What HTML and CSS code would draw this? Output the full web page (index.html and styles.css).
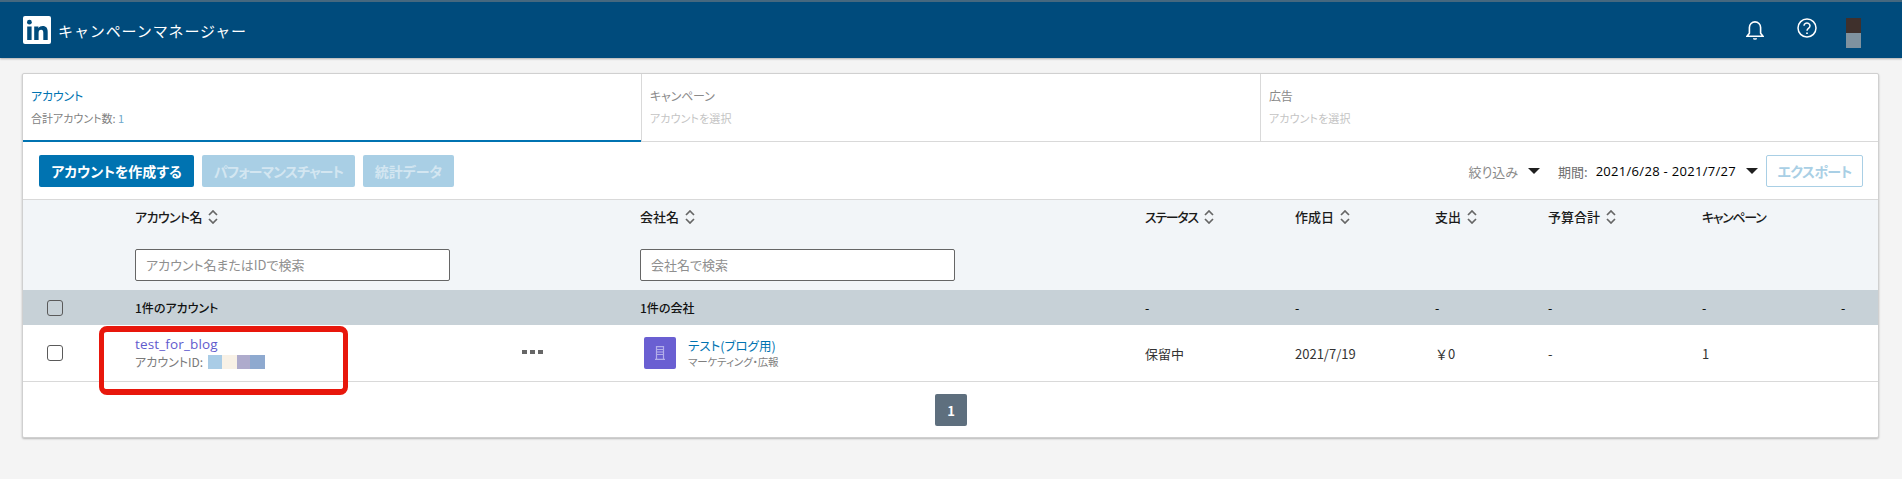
FILE: index.html
```html
<!DOCTYPE html>
<html lang="ja">
<head>
<meta charset="utf-8">
<title>キャンペーンマネージャー</title>
<link rel="stylesheet" href="styles.css">
</head>
<body>
<header class="topbar">
  <div class="brand">
    <svg class="logo" viewBox="0 0 28 28"><rect width="28" height="28" rx="2" fill="#fff"/><circle cx="6.4" cy="6.2" r="2.4" fill="#004b7c"/><path fill="#004b7c" d="M4.2 10.4h4.4V24H4.2zM11.2 10.4h4.2v1.900c.8-1.300 2.300-2.200 4.300-2.200 3.600 0 5 2.300 5 5.900V24h-4.400v-7.200c0-1.800-.6-3-2.200-3-1.700 0-2.500 1.200-2.500 3V24h-4.400z"/></svg>
    <span class="brand-name">キャンペーンマネージャー</span>
  </div>
  <div class="top-icons">
    <svg class="bell" viewBox="0 0 18 20" fill="none" stroke="#fff" stroke-width="1.600"><path d="M1 16.200h16l-2.400-3V7.500a5.600 5.600 0 0 0-11.200 0v5.700z"/><path d="M7 18.200h4v.6a2 1 0 0 1-4 0z" fill="#fff" stroke="none"/></svg>
    <svg class="help" viewBox="0 0 20 20" fill="none" stroke="#fff" stroke-width="1.500"><circle cx="10" cy="10" r="9"/><path d="M7 7.800a3 2.800 0 1 1 4.700 2.300c-1 .7-1.700 1.200-1.700 2.600"/><path d="M10 14.400v1.700" stroke-width="1.700"/></svg>
    <div class="avatar"><div class="avatar-top"></div><div class="avatar-bottom"></div></div>
  </div>
</header>

<main class="card">
  <nav class="tabs">
    <div class="tab tab-active">
      <div class="tab-title">アカウント</div>
      <div class="tab-sub">合計アカウント数: <span class="tab-count">1</span></div>
    </div>
    <div class="tab">
      <div class="tab-title">キャンペーン</div>
      <div class="tab-sub tab-hint">アカウントを選択</div>
    </div>
    <div class="tab">
      <div class="tab-title">広告</div>
      <div class="tab-sub tab-hint">アカウントを選択</div>
    </div>
  </nav>

  <div class="toolbar">
    <div class="actions">
      <button class="btn btn-primary">アカウントを作成する</button>
      <button class="btn btn-disabled btn-chart">パフォーマンスチャート</button>
      <button class="btn btn-disabled btn-stats">統計データ</button>
    </div>
    <div class="filters">
      <span class="filter-label">絞り込み</span><span class="caret"></span>
      <span class="period-label">期間:</span><span class="period-value">2021/6/28 - 2021/7/27</span><span class="caret"></span>
      <button class="btn-export">エクスポート</button>
    </div>
  </div>

  <div class="thead">
    <div class="row-grid head-row">
      <div></div>
      <div class="th"><span class="th-mixed">アカウント名</span> <svg class="sort" viewBox="0 0 10 14"><path d="M1 5l4-4 4 4M1 9l4 4 4-4"/></svg></div>
      <div class="th"><span>会社名</span> <svg class="sort" viewBox="0 0 10 14"><path d="M1 5l4-4 4 4M1 9l4 4 4-4"/></svg></div>
      <div class="th"><span class="th-kana">ステータス</span> <svg class="sort" viewBox="0 0 10 14"><path d="M1 5l4-4 4 4M1 9l4 4 4-4"/></svg></div>
      <div class="th"><span>作成日</span> <svg class="sort" viewBox="0 0 10 14"><path d="M1 5l4-4 4 4M1 9l4 4 4-4"/></svg></div>
      <div class="th"><span>支出</span> <svg class="sort" viewBox="0 0 10 14"><path d="M1 5l4-4 4 4M1 9l4 4 4-4"/></svg></div>
      <div class="th"><span>予算合計</span> <svg class="sort" viewBox="0 0 10 14"><path d="M1 5l4-4 4 4M1 9l4 4 4-4"/></svg></div>
      <div class="th"><span class="th-kana">キャンペーン</span></div>
      <div></div>
    </div>
    <div class="row-grid search-row">
      <div></div>
      <div><input class="search" placeholder="アカウント名またはIDで検索"></div>
      <div><input class="search" placeholder="会社名で検索"></div>
    </div>
  </div>

  <div class="row-grid group-row">
    <div class="check-cell"><span class="check"></span></div>
    <div>1件のアカウント</div>
    <div>1件の会社</div>
    <div>-</div><div>-</div><div>-</div><div>-</div><div>-</div><div>-</div>
  </div>

  <div class="row-grid data-row">
    <div class="check-cell"><span class="check"></span></div>
    <div class="account-cell">
      <div class="account-main">
        <a class="account-name">test_for_blog</a>
        <div class="account-id">アカウントID: <span class="redact"><i class="r1"></i><i class="r2"></i><i class="r3"></i><i class="r4"></i></span></div>
      </div>
      <div class="dots"><i></i><i></i><i></i></div>
      <div class="annotation"></div>
    </div>
    <div class="company-cell">
      <div class="company-icon"><svg viewBox="0 0 10 14" fill="none" stroke="#b3aeea" stroke-width="1.200"><path d="M1.500.6h7v12.800h-7zM1.500 3.500h7M1.500 6h7M1.500 8.500h7M0 13.400h10"/></svg></div>
      <div>
        <a class="company-name">テスト(ブログ用)</a>
        <div class="company-sub">マーケティング・広報</div>
      </div>
    </div>
    <div>保留中</div>
    <div>2021/7/19</div>
    <div class="spend">￥0</div>
    <div>-</div>
    <div>1</div>
    <div></div>
  </div>

  <div class="pager"><button class="page">1</button></div>
</main>
</body>
</html>
```
FILE: styles.css
```css
* { box-sizing: border-box; }
html, body { margin: 0; padding: 0; }
body {
  background: #f4f4f4;
  height: 479px;
  overflow: hidden;
  font-family: "Noto Sans CJK JP", "Open Sans", sans-serif;
  font-feature-settings: "palt";
  font-size: 12px;
  color: #1f1f1f;
}
.topbar {
  height: 58px;
  background: #004b7c;
  border-top: 2px solid #46687f;
  box-shadow: 0 1px 2px rgba(0,0,0,.3);
  display: flex;
  justify-content: space-between;
  align-items: flex-start;
  padding: 14px 41px 0 23px;
}
.brand { display: flex; align-items: center; gap: 7px; }
.logo { width: 28px; height: 28px; display: block; }
.brand-name { color: #fff; font-size: 15px; letter-spacing: .9px; font-feature-settings: normal; }
.top-icons { display: flex; align-items: flex-start; }
.bell { width: 18px; height: 20px; margin-top: 4px; }
.help { width: 20px; height: 20px; margin: 2px 29px 0 33px; }
.avatar { width: 15px; height: 30px; margin-top: 2px; }
.avatar-top { height: 15px; background: #3f302c; }
.avatar-bottom { height: 15px; background: #7f929f; }

.card {
  margin: 15px 23px 0 22px;
  height: 365px;
  background: #fff;
  border: 1px solid #d0d0d0;
  border-radius: 2px;
  box-shadow: 0 1px 2px rgba(0,0,0,.25);
}
.tabs {
  display: grid;
  grid-template-columns: 618px 619px 1fr;
  height: 68px;
  border-bottom: 1px solid #d9d9d9;
}
.tab { padding: 14px 8px 0 8px; border-left: 1px solid #d9d9d9; }
.tab-active { border-left: 0; border-bottom: 2px solid #0073b1; height: 68px; }
.tab-title { font-size: 12px; line-height: 16px; color: #8a8a8a; letter-spacing: -.2px; }
.tab-sub { font-size: 11px; line-height: 14px; margin-top: 7px; color: #c4c4c4; }
.tab-hint { letter-spacing: .1px; }
.tab-active .tab-title { color: #0073b1; }
.tab-active .tab-sub { color: #7f7f7f; }
.tab-active .tab-sub .tab-count { color: #6fa8cc; }

.toolbar {
  height: 58px;
  display: flex;
  justify-content: space-between;
  padding: 13px 15px 0 16px;
  border-bottom: 1px solid #d9d9d9;
}
.actions { display: flex; gap: 8px; }
.btn {
  height: 32px;
  border: 0;
  border-radius: 2px;
  font: inherit;
  font-feature-settings: "palt";
  font-size: 14px;
  font-weight: 700;
  padding: 0;
}
.btn-primary { width: 155px; background: #0073b1; color: #fff; }
.btn-disabled { background: #a9cfe5; color: #d3e6f1; }
.btn-chart { width: 153px; letter-spacing: -1px; }
.btn-stats { width: 91px; }
.filters { display: flex; align-items: center; height: 32px; }
.filter-label { color: #8a8a8a; font-size: 13px; }
.caret {
  width: 0; height: 0;
  border-left: 6px solid transparent;
  border-right: 6px solid transparent;
  border-top: 6px solid #1f1f1f;
  margin-left: 10px;
}
.period-label { color: #6f6f6f; font-size: 13px; margin-left: 18px; }
.period-value { color: #000; font-size: 13px; letter-spacing: .3px; margin-left: 8px; font-family: "Open Sans", sans-serif; }
.btn-export {
  width: 97px; height: 32px; margin-left: 8px;
  background: #fff;
  border: 1px solid #a9cfe5;
  border-radius: 2px;
  color: #a9cfe5;
  font: inherit;
  font-feature-settings: "palt";
  font-size: 14px;
  font-weight: 700;
  letter-spacing: -.6px;
  padding: 0;
}

.row-grid {
  display: grid;
  grid-template-columns: 112px 505px 505px 150px 140px 113px 154px 139px 1fr;
}
.thead { height: 90px; background: #f2f5f8; }
.head-row { height: 49px; padding-top: 8px; align-items: flex-start; }
.th { font-size: 13px; font-weight: 500; line-height: 18px; color: #1a1a1a; display: flex; align-items: center; gap: 6px; }
.th-mixed { letter-spacing: -.6px; }
.th-kana { letter-spacing: -1.300px; }
.sort { width: 10px; height: 14px; fill: none; stroke: #666; stroke-width: 1.700; }
.search-row { height: 32px; }
.search {
  display: block;
  height: 32px;
  width: 315px;
  border: 1px solid #666;
  border-radius: 2px;
  background: #fff;
  padding: 0 10px 2px;
  font: inherit;
  font-feature-settings: "palt";
  font-size: 13px;
  outline: none;
}
.search::placeholder { color: #8f8f8f; opacity: 1; }

.group-row {
  height: 35px;
  background: #c7d1d7;
  align-items: center;
  font-size: 12px;
  font-weight: 500;
  color: #111;
}
.check-cell { padding-left: 24px; display: flex; }
.check {
  display: block;
  width: 16px; height: 16px;
  border: 1px solid #5a5a5a;
  border-radius: 3px;
}
.data-row {
  height: 57px;
  align-items: center;
  border-bottom: 1px solid #d9d9d9;
  font-size: 13px;
  color: #333;
}
.account-cell {
  position: relative;
  align-self: stretch;
  display: flex;
  align-items: center;
  justify-content: space-between;
  padding-right: 97px;
}
.account-name { display: block; color: #5f5bcd; font-size: 13.500px; letter-spacing: .15px; line-height: 17px; font-family: "Open Sans", sans-serif; }
.account-id { color: #7a7a7a; font-size: 12px; line-height: 18px; display: flex; align-items: center; gap: 5px; }
.redact { display: flex; height: 14px; }
.redact i { display: block; height: 14px; }
.r1 { width: 14px; background: #a9cce6; }
.r2 { width: 15px; background: #f8f1e6; }
.r3 { width: 13px; background: #aeabcc; }
.r4 { width: 15px; background: #8ea9cf; }
.dots { display: flex; gap: 3px; margin-top: -3px; }
.dots i { display: block; width: 5px; height: 4px; background: #666; }
.annotation {
  position: absolute;
  left: -36px;
  top: 1px;
  width: 249px;
  height: 69px;
  border-style: solid;
  border-color: #e8170c;
  border-width: 6px 5px;
  border-radius: 8px;
  pointer-events: none;
}
.company-cell { display: flex; align-items: center; gap: 12px; padding-left: 4px; }
.company-icon {
  width: 32px; height: 32px;
  background: #6a5fd2;
  border-radius: 2px;
  display: flex;
  align-items: center;
  justify-content: center;
}
.company-icon svg { width: 10px; height: 14px; display: block; }
.company-name { display: block; color: #0073b1; font-size: 12.500px; line-height: 17px; }
.company-sub { color: #7f7f7f; font-size: 10.500px; line-height: 15px; letter-spacing: -.1px; }
.spend { font-feature-settings: normal; }
.pager { display: flex; justify-content: center; padding-top: 12px; padding-left: 1px; }
.page {
  width: 32px; height: 32px;
  border: 0;
  border-radius: 2px;
  background: #5e6f7e;
  color: #fff;
  font: inherit;
  font-size: 13px;
  font-weight: 700;
  padding: 0;
}
```
